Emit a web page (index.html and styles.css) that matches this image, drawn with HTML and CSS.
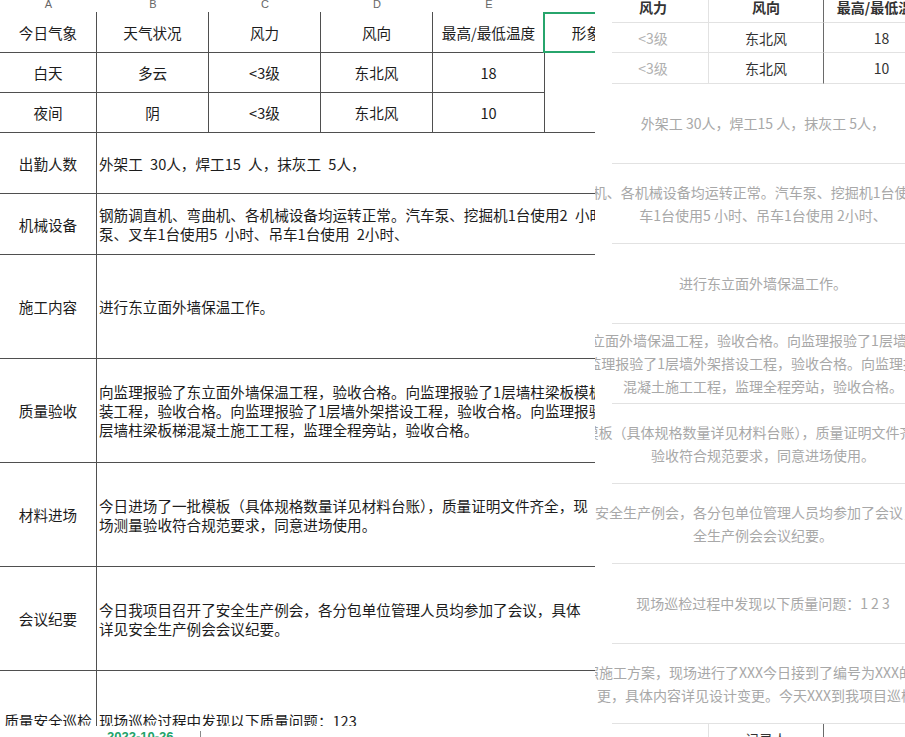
FILE: index.html
```html
<!DOCTYPE html>
<html lang="zh-CN">
<head>
<meta charset="utf-8">
<title>施工日志</title>
<link rel="stylesheet" href="styles.css">
</head>
<body>
<div class="screen">
  <div class="sheet">
    <div class="col-letters">
      <span class="cl cl-a">A</span><span class="cl">B</span><span class="cl">C</span><span class="cl">D</span><span class="cl">E</span><span class="cl">F</span>
    </div>
    <div class="grid-wrap">
      <div class="grid">
        <div class="c">今日气象</div>
        <div class="c">天气状况</div>
        <div class="c">风力</div>
        <div class="c">风向</div>
        <div class="c">最高/最低温度</div>
        <div class="c f sel">形象进度</div>

        <div class="c">白天</div>
        <div class="c">多云</div>
        <div class="c">&lt;3级</div>
        <div class="c">东北风</div>
        <div class="c">18</div>
        <div class="c f fm"></div>

        <div class="c">夜间</div>
        <div class="c">阴</div>
        <div class="c">&lt;3级</div>
        <div class="c">东北风</div>
        <div class="c">10</div>

        <div class="c">出勤人数</div>
        <div class="c txt"><div class="lines"><span>外架工 30人，焊工15 人，抹灰工 5人，</span></div></div>

        <div class="c">机械设备</div>
        <div class="c txt"><div class="lines"><span>钢筋调直机、弯曲机、各机械设备均运转正常。汽车泵、挖掘机1台使用2 小时、汽车</span><span>泵、叉车1台使用5 小时、吊车1台使用 2小时、</span></div></div>

        <div class="c">施工内容</div>
        <div class="c txt"><div class="lines"><span>进行东立面外墙保温工作。</span></div></div>

        <div class="c">质量验收</div>
        <div class="c txt"><div class="lines"><span>向监理报验了东立面外墙保温工程，验收合格。向监理报验了1层墙柱梁板模板安</span><span>装工程，验收合格。向监理报验了1层墙外架搭设工程，验收合格。向监理报验了1</span><span>层墙柱梁板梯混凝土施工工程，监理全程旁站，验收合格。</span></div></div>

        <div class="c">材料进场</div>
        <div class="c txt"><div class="lines"><span>今日进场了一批模板（具体规格数量详见材料台账），质量证明文件齐全，现</span><span>场测量验收符合规范要求，同意进场使用。</span></div></div>

        <div class="c">会议纪要</div>
        <div class="c txt"><div class="lines"><span>今日我项目召开了安全生产例会，各分包单位管理人员均参加了会议，具体</span><span>详见安全生产例会会议纪要。</span></div></div>

        <div class="c">质量安全巡检</div>
        <div class="c txt"><div class="lines"><span>现场巡检过程中发现以下质量问题：123</span></div></div>
      </div>
    </div>
    <div class="sheet-foot">
      <span class="date">2022-10-26</span>
      <span class="vline"></span>
    </div>
  </div>

  <div class="panel">
    <div class="rt">
      <div class="wx">
        <div class="wc k1 h">风力</div>
        <div class="wc k2 h">风向</div>
        <div class="wc k3 h">最高/最低温度</div>
        <div class="wc k1 muted">&lt;3级</div>
        <div class="wc k2">东北风</div>
        <div class="wc k3">18</div>
        <div class="wc k1 muted">&lt;3级</div>
        <div class="wc k2">东北风</div>
        <div class="wc k3">10</div>
      </div>

      <div class="rrow"><div class="rtext"><span>外架工 30人，焊工15 人，抹灰工 5人，</span></div></div>
      <div class="rrow"><div class="rtext"><span>钢筋调直机、弯曲机、各机械设备均运转正常。汽车泵、挖掘机1台使用2 小时、汽车泵、叉</span><span>车1台使用5 小时、吊车1台使用 2小时、</span></div></div>
      <div class="rrow"><div class="rtext"><span>进行东立面外墙保温工作。</span></div></div>
      <div class="rrow"><div class="rtext"><span>向监理报验了东立面外墙保温工程，验收合格。向监理报验了1层墙柱梁板模板安装工程</span><span>，验收合格。向监理报验了1层墙外架搭设工程，验收合格。向监理报验了1层墙柱梁板梯</span><span>混凝土施工工程，监理全程旁站，验收合格。</span></div></div>
      <div class="rrow"><div class="rtext"><span>今日进场了一批模板（具体规格数量详见材料台账），质量证明文件齐全，经现场取样测量</span><span>验收符合规范要求，同意进场使用。</span></div></div>
      <div class="rrow"><div class="rtext"><span>今日我项目召开了安全生产例会，各分包单位管理人员均参加了会议，具体会议内容详见安</span><span>全生产例会会议纪要。</span></div></div>
      <div class="rrow"><div class="rtext"><span>现场巡检过程中发现以下质量问题：1 2 3</span></div></div>
      <div class="rrow"><div class="rtext"><span>按照施工方案，现场进行了XXX今日接到了编号为XXX的设计变</span><span>更，具体内容详见设计变更。今天XXX到我项目巡检。</span></div></div>

      <div class="wx wx-foot">
        <div class="wc k1"></div>
        <div class="wc k2">记录人</div>
        <div class="wc k3"></div>
      </div>
    </div>
  </div>
</div>
</body>
</html>
```

FILE: styles.css
```css
html, body {
  margin: 0;
  padding: 0;
  background: #ffffff;
}

body {
  font-family: "Noto Sans CJK SC", "Noto Sans", sans-serif;
}

.screen {
  display: flex;
  width: 905px;
  height: 737px;
  overflow: hidden;
}

/* ---------- left: spreadsheet ---------- */
.sheet {
  flex: none;
  width: 595px;
  height: 737px;
  overflow: hidden;
  display: flex;
  flex-direction: column;
}

.col-letters {
  flex: none;
  height: 12px;
  display: flex;
  font-family: "Liberation Sans", sans-serif;
  font-size: 11px;
  line-height: 8px;
  color: #666;
}

.cl {
  flex: none;
  width: 112px;
  text-align: center;
}

.cl-a {
  width: 97px;
}

.grid-wrap {
  flex: none;
  height: 714px;
  overflow: hidden;
}

.grid {
  display: grid;
  grid-template-columns: 97px 112px 112px 112px 112px 112px;
  grid-template-rows: 41px 40px 40px 61px 61px 104px 104px 104px 104px 100px;
  width: 657px;
  font-size: 14.6px;
  word-spacing: 4px;
  color: #1c1c1c;
}

.c {
  border-right: 1px solid #4f4f4f;
  border-bottom: 1px solid #4f4f4f;
  display: flex;
  align-items: center;
  justify-content: center;
  white-space: nowrap;
  min-width: 0;
}

.f {
  border-right: none;
}

.fm {
  grid-row: span 2;
}

.sel {
  position: relative;
}

.sel::after {
  content: "";
  position: absolute;
  left: -2px;
  top: 0;
  right: 2px;
  bottom: -1px;
  border: 2px solid #27a56c;
}

.txt {
  grid-column: 2 / span 5;
  border-right: none;
  justify-content: flex-start;
  padding-left: 2px;
}

.lines {
  display: flex;
  flex-direction: column;
  line-height: 19px;
}

.lines span {
  white-space: nowrap;
}

.sheet-foot {
  flex: none;
  height: 11px;
  display: flex;
  overflow: hidden;
}

.date {
  margin-left: 107px;
  padding-top: 4px;
  font-family: "Liberation Sans", sans-serif;
  font-size: 13px;
  line-height: 13px;
  font-weight: bold;
  color: #22a36a;
}

.vline {
  margin-left: 26px;
  margin-top: 5px;
  width: 1px;
  height: 6px;
  background: #8a8a8a;
}

/* ---------- right: web table ---------- */
.panel {
  flex: none;
  width: 310px;
  height: 737px;
  overflow: hidden;
  background: #ffffff;
  color: #333;
  font-size: 14px;
}

.rt {
  margin: -8px 0 0 17px;
  width: 326px;
}

.wx {
  display: grid;
  grid-template-columns: 97px 115px 115px;
  grid-template-rows: 31px 30px 31px;
}

.wx-foot {
  grid-template-rows: 30px;
}

.wc {
  border-bottom: 1px solid #e2e2e2;
  border-right: 1px solid #e2e2e2;
  display: flex;
  align-items: center;
  justify-content: center;
  white-space: nowrap;
}

.wc.k1 {
  padding-right: 14px;
}

.wc.k2 {
  border-right-color: #6a6a6a;
}

.wc.k3 {
  border-right: none;
}

.wc.h {
  font-weight: bold;
  color: #333;
}

.wc.muted {
  color: #b0b0b0;
}

.rrow {
  height: 80px;
  box-sizing: border-box;
  border-bottom: 1px solid #e2e2e2;
  display: flex;
  align-items: center;
}

.rtext {
  flex: none;
  width: 302px;
  display: flex;
  flex-direction: column;
  align-items: center;
  line-height: 23px;
  color: #a8a8a8;
}

.rtext span {
  white-space: nowrap;
}
```
